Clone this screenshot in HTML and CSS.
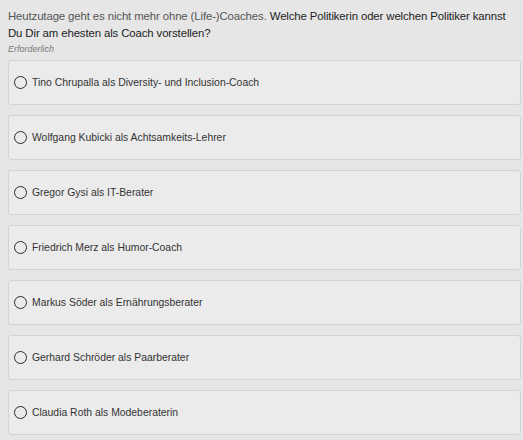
FILE: index.html
```html
<!DOCTYPE html>
<html lang="de">
<head>
  <meta charset="UTF-8">
  <meta name="viewport" content="width=device-width, initial-scale=1.0">
  <title>Umfrage</title>
  <link rel="stylesheet" href="styles.css">
</head>
<body>
  <div class="question">
    <p class="question-title">
      <span class="intro">Heutzutage geht es nicht mehr ohne (Life-)Coaches.</span>
      Welche Politikerin oder welchen Politiker kannst Du Dir am ehesten als Coach vorstellen?
    </p>
    <p class="required">Erforderlich</p>

    <div class="options">
      <label class="option"><input type="radio" name="coach"><span>Tino Chrupalla als Diversity- und Inclusion-Coach</span></label>
      <label class="option"><input type="radio" name="coach"><span>Wolfgang Kubicki als Achtsamkeits-Lehrer</span></label>
      <label class="option"><input type="radio" name="coach"><span>Gregor Gysi als IT-Berater</span></label>
      <label class="option"><input type="radio" name="coach"><span>Friedrich Merz als Humor-Coach</span></label>
      <label class="option"><input type="radio" name="coach"><span>Markus Söder als Ernährungsberater</span></label>
      <label class="option"><input type="radio" name="coach"><span>Gerhard Schröder als Paarberater</span></label>
      <label class="option"><input type="radio" name="coach"><span>Claudia Roth als Modeberaterin</span></label>
    </div>
  </div>
</body>
</html>
```

FILE: styles.css
```css
body {
  font-family: "Liberation Sans", Arial, sans-serif;
  background-color: #e6e6e6;
  color: #333;
  margin: 0;
  padding: 0 2px 0 8px;
}

.question-title {
  margin: 0;
  padding-top: 8px;
  font-size: 11.4px;
  letter-spacing: -0.12px;
  line-height: 17px;
  color: #222;
}

.question-title .intro {
  color: #555;
}

.required {
  margin: 1px 0 0;
  font-size: 9px;
  font-style: italic;
  color: #777;
  line-height: 12px;
}

.options {
  display: flex;
  flex-direction: column;
  gap: 10px;
  margin-top: 5px;
}

.option {
  display: flex;
  align-items: center;
  box-sizing: border-box;
  height: 45px;
  padding: 0 5px;
  background: #ebebeb;
  border: 1px solid #d3d3d3;
  border-radius: 3px;
  font-size: 10.4px;
  color: #333;
  cursor: pointer;
}

.option input {
  appearance: none;
  width: 13px;
  height: 13px;
  margin: 0 5px 0 0;
  border: 1.8px solid #2b2b2b;
  border-radius: 50%;
  background: transparent;
  box-sizing: border-box;
}
```
